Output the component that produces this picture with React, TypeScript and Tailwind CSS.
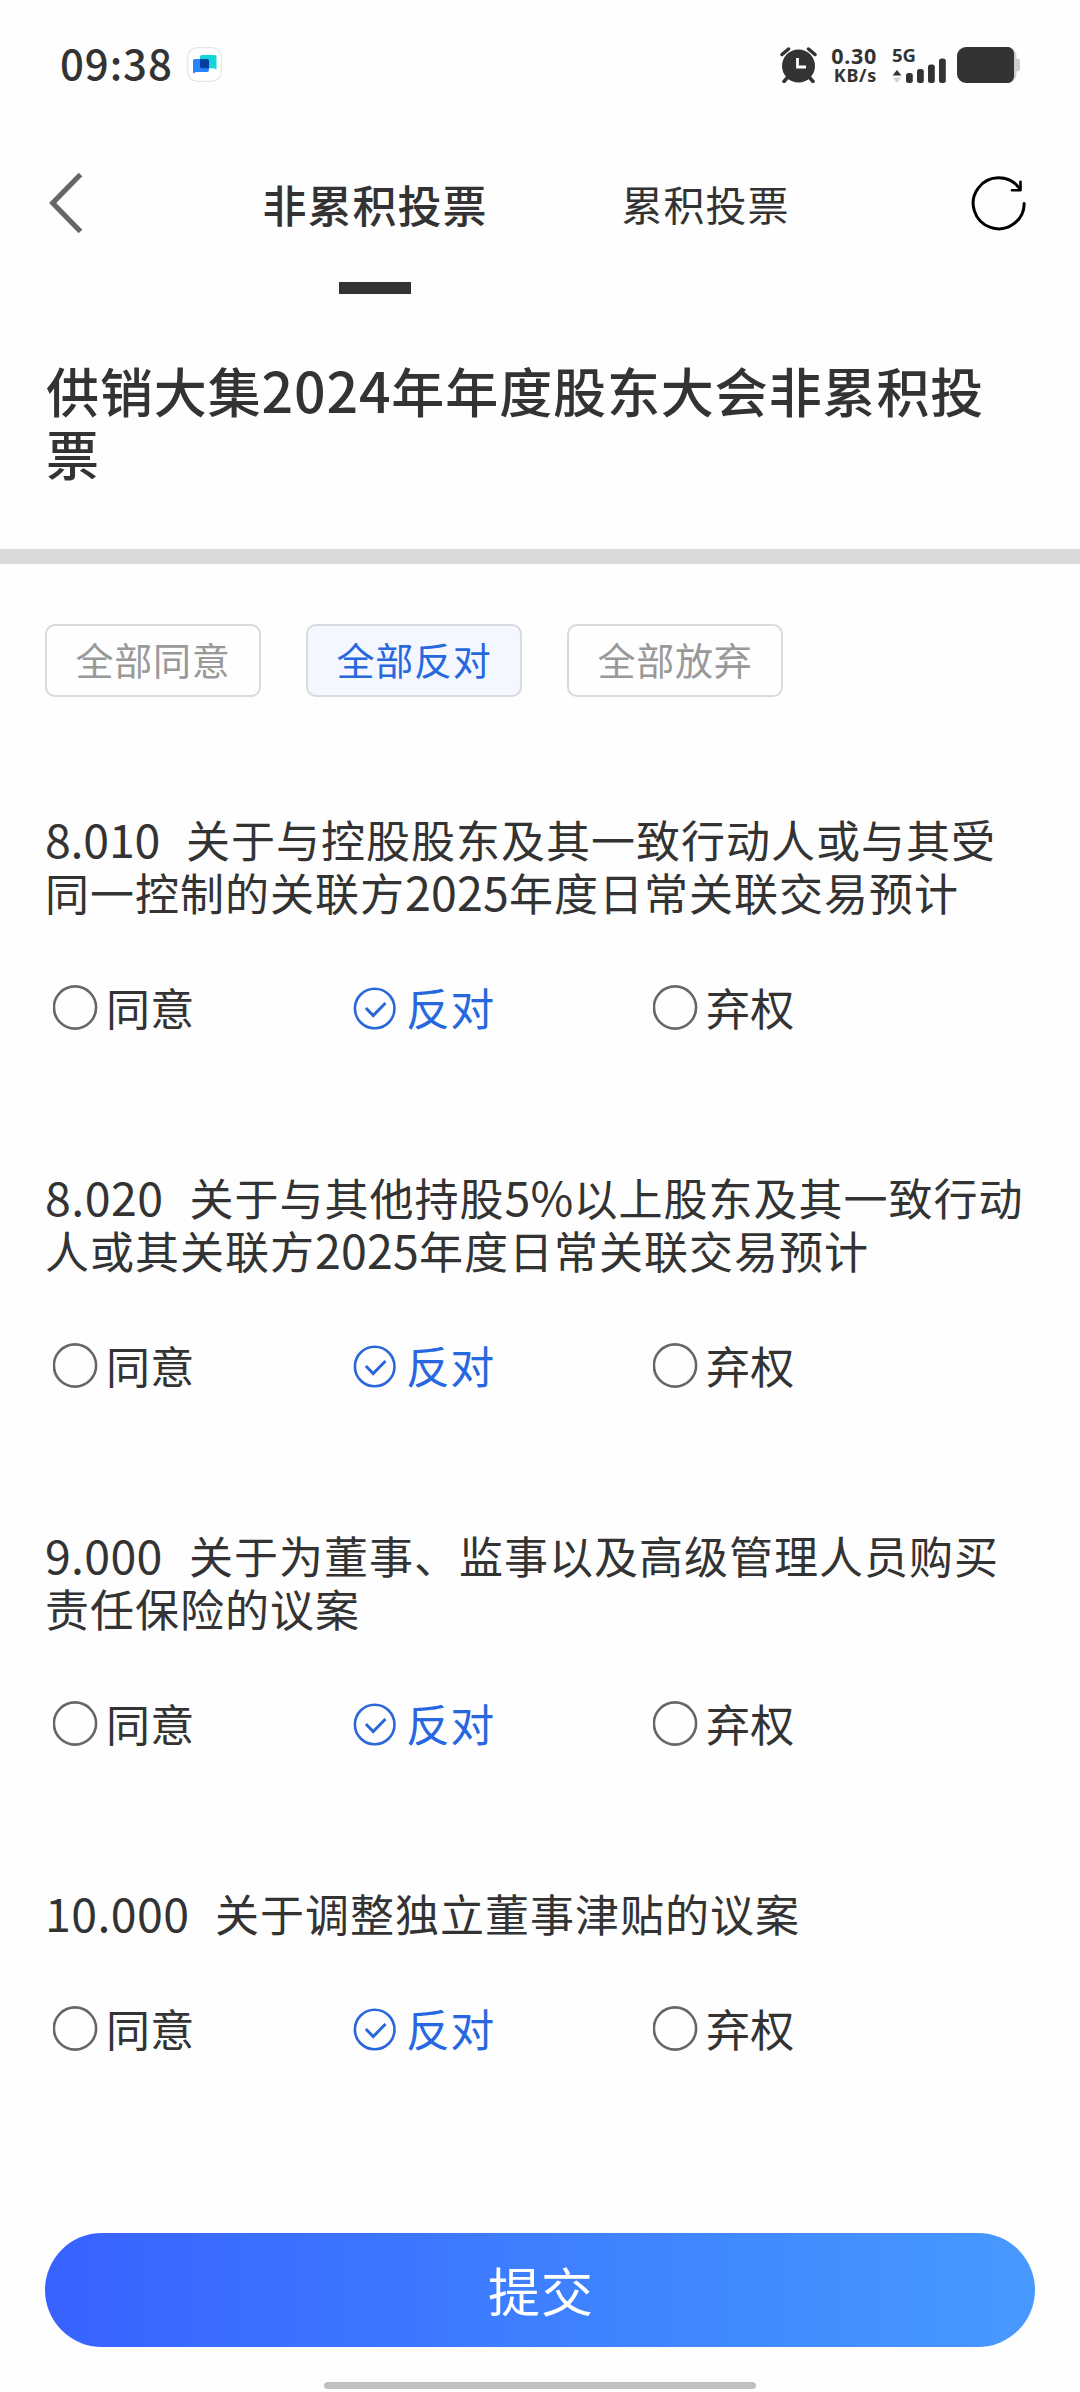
import React from "react";

const CJK = "font-['Noto_Sans_CJK_SC',sans-serif]";

type Part = string | { n: string };

interface Motion {
  id: string;
  idClass: string;
  lines: Part[][];
}

const MOTIONS: Motion[] = [
  {
    id: "8.010",
    idClass: "w-[141px] tracking-[-0.2px]",
    lines: [
      ["关于与控股股东及其一致行动人或与其受"],
      ["同一控制的关联方", { n: "2025" }, "年度日常关联交易预计"],
    ],
  },
  {
    id: "8.020",
    idClass: "w-[144.5px] tracking-[0.5px]",
    lines: [
      ["关于与其他持股", { n: "5%" }, "以上股东及其一致行动"],
      ["人或其关联方", { n: "2025" }, "年度日常关联交易预计"],
    ],
  },
  {
    id: "9.000",
    idClass: "w-[144px] tracking-[0.3px]",
    lines: [["关于为董事、监事以及高级管理人员购买"], ["责任保险的议案"]],
  },
  {
    id: "10.000",
    idClass: "w-[170px] tracking-[0.4px]",
    lines: [["关于调整独立董事津贴的议案"]],
  },
];

function StatusBar() {
  return (
    <div className="flex h-[130px] items-start pl-[60px] pr-[60px] pt-[47px] text-[#333]">
      <div className="-mt-[3px] flex h-9 w-[127px] items-center text-[42px] font-medium leading-none tracking-[0.9px] whitespace-nowrap">
        <span>09:38</span>
      </div>
      <svg className="size-[35px]" viewBox="0 0 35 35">
        <rect x="0.7" y="0.7" width="33.6" height="33.6" rx="9.5" fill="#fff" stroke="#e6e6e6" strokeWidth="1.2" />
        <path d="M15 8h12.500a2 2 0 0 1 2 2v12.500l-3-1.300H15a2 2 0 0 1-2-2V10a2 2 0 0 1 2-2z" fill="#12d5d8" />
        <path d="M8 12h12a2 2 0 0 1 2 2v9a2 2 0 0 1-2 2H9.200l-3.200 1.600V14a2 2 0 0 1 2-2z" fill="#2684ff" />
        <path d="M13 12h7a2 2 0 0 1 2 2v7.200h-7a2 2 0 0 1-2-2z" fill="#06409c" />
      </svg>
      <div className="ml-auto flex h-9 items-start">
        <svg className="h-9 w-[37px]" viewBox="0 0 37 36">
          <circle cx="18.500" cy="19" r="16.500" fill="#333" />
          <path d="M2 7.500l6.500-5.500M35 7.500l-6.500-5.500" stroke="#333" strokeWidth="3.500" strokeLinecap="round" />
          <path d="M8 30l-4 4.500M29 30l4 4.500" stroke="#333" strokeWidth="3.500" strokeLinecap="round" />
          <path d="M17.500 11v9h8.500" fill="none" stroke="#fff" strokeWidth="2.800" />
        </svg>
        <div className="ml-[14px] flex w-[45px] flex-col items-end font-['Noto_Sans',sans-serif] font-bold whitespace-nowrap">
          <span className="-mr-px h-[18px] text-[21.5px] leading-[17px] tracking-[0.7px]">0.30</span>
          <span className="-mr-px h-[18px] text-[18px] leading-[21px] tracking-[0.7px]">KB/s</span>
        </div>
        <div className="ml-[16px] flex h-9 w-[54px] flex-col">
          <span className="h-[11px] font-['Noto_Sans',sans-serif] text-[18.5px] font-bold leading-[15px]">5G</span>
          <svg className="h-[25px] w-[54px]" viewBox="0 0 54 25">
            <path d="M0.500 17.500l4.500-5.500 4.500 5.500z" fill="#333" />
            <path d="M0.500 19.500l4.500 5.500 4.500-5.500z" fill="#d4d4d4" />
            <rect x="14" y="15" width="6.800" height="10" rx="2.500" fill="#333" />
            <rect x="25" y="11" width="6.800" height="14" rx="2.500" fill="#333" />
            <rect x="36" y="6.500" width="6.800" height="18.500" rx="2.500" fill="#333" />
            <rect x="47" y="0.500" width="6.800" height="24.500" rx="2.500" fill="#333" />
          </svg>
        </div>
        <svg className="ml-[11px] h-9 w-[63px]" viewBox="0 0 63 36">
          <rect x="8" y="0" width="51.500" height="36" rx="9" fill="#ccc" />
          <rect x="56" y="11.500" width="7" height="13" rx="3" fill="#ccc" />
          <path d="M9 0h42c3 0 6 3 6 7v22c0 4-3 7-6 7H9a9 9 0 0 1-9-9V9a9 9 0 0 1 9-9z" fill="#333" />
        </svg>
      </div>
    </div>
  );
}

function NavBar() {
  return (
    <nav className="flex h-[170px] items-start text-[#333]">
      <svg className="ml-[45px] mt-[40px] h-[66px] w-[45px]" viewBox="0 0 45 66" fill="none">
        <path d="M35.500 4.500L7.700 33l27.800 28.500" stroke="#666" strokeWidth="5.200" />
      </svg>
      <div className="ml-[120px] flex w-[330px] flex-col items-center">
        <div className="flex h-[152px] items-center pb-[5px] text-[44px] font-medium leading-none tracking-[1px] whitespace-nowrap">非累积投票</div>
        <div className="h-3 w-[72px] bg-[#333]" />
      </div>
      <div className="flex h-[152px] w-[330px] items-center justify-center pb-[5px] pl-px text-[41px] leading-none tracking-[1px] whitespace-nowrap">累积投票</div>
      <svg className="ml-[98px] mt-[42px] size-[64px]" viewBox="0 0 64 64" fill="none">
        <path d="M56.200 31.500A25.500 25.500 0 1 1 51.500 16.500" stroke="#000" strokeWidth="3" strokeLinecap="round" />
        <path d="M52.500 9.700v8.600h-8.500" stroke="#000" strokeWidth="2.600" strokeLinecap="round" strokeLinejoin="round" />
      </svg>
    </nav>
  );
}

function BulkButton({ label, active = false }: { label: string; active?: boolean }) {
  return (
    <button
      className={
        "flex h-[73px] w-[216px] items-center justify-center rounded-[10px] border-2 pb-[3px] text-[38px] leading-none tracking-[0.8px] whitespace-nowrap " +
        (active ? "border-[#d9dadd] bg-[#f4f7ff] text-[#2768dc]" : "border-[#dadada] text-[#999]")
      }
    >
      {label}
    </button>
  );
}

function Choice({ label, checked = false }: { label: string; checked?: boolean }) {
  return (
    <div className="flex h-[45px] w-[300px] items-center">
      {checked ? (
        <svg className="size-[45px]" viewBox="0 0 45 45" fill="none">
          <circle cx="21.700" cy="23.500" r="19.800" stroke="#2b67d9" strokeWidth="2.600" />
          <path d="M12.900 23l7.300 7.600 12.300-12.600" stroke="#2b67d9" strokeWidth="3" />
        </svg>
      ) : (
        <svg className="size-[45px]" viewBox="0 0 45 45" fill="none">
          <circle cx="22" cy="22.500" r="21.100" stroke="#666" strokeWidth="2.600" />
        </svg>
      )}
      <span
        className={
          "ml-[8px] text-[44px] leading-[45px] tracking-[0.3px] whitespace-nowrap " +
          (checked ? "text-[#2768e0]" : "text-[#333]")
        }
      >
        {label}
      </span>
    </div>
  );
}

function MotionItem({ motion }: { motion: Motion }) {
  return (
    <section className="pb-[141px] text-[44px] tracking-[1px] text-[#333]">
      {motion.lines.map((parts, i) => (
        <div key={i} className="h-[53px] leading-[53px] whitespace-nowrap">
          {i === 0 && (
            <span className={"inline-block text-[46.5px] leading-[0] " + motion.idClass}>{motion.id}</span>
          )}
          {parts.map((p, j) =>
            typeof p === "string" ? (
              <span key={j}>{p}</span>
            ) : (
              <span key={j} className="text-[46.5px] leading-[0] tracking-[0.2px]">{p.n}</span>
            ),
          )}
        </div>
      ))}
      <div className="mt-[66px] flex pl-[8px]">
        <Choice label="同意" />
        <Choice label="反对" checked />
        <Choice label="弃权" />
      </div>
    </section>
  );
}

export default function App() {
  return (
    <div className={"flex h-[2392px] w-[1080px] flex-col overflow-hidden bg-[#fefefe] " + CJK}>
      <StatusBar />
      <NavBar />
      <h1 className="h-[249px] pl-[46px] pt-[59px] text-[53px] font-medium leading-[63px] tracking-[0.9px] whitespace-nowrap text-[#333]">
        供销大集<span className="text-[55.5px] leading-[0] tracking-[0.8px]">2024</span>年年度股东大会非累积投
        <br />票
      </h1>
      <div className="h-[15px] shrink-0 bg-[#dadada]" />
      <div className="flex gap-[45px] pl-[45px] pt-[60px]">
        <BulkButton label="全部同意" />
        <BulkButton label="全部反对" active />
        <BulkButton label="全部放弃" />
      </div>
      <main className="flex h-[1536px] shrink-0 flex-col overflow-hidden pl-[45px] pt-[116px]">
        {MOTIONS.map((m) => (
          <MotionItem key={m.id} motion={m} />
        ))}
      </main>
      <button className="mx-[45px] flex h-[114px] shrink-0 items-center justify-center rounded-full bg-linear-to-r from-[#3862ff] to-[#4899ff] pl-[2px] text-[52px] leading-none tracking-[1px] text-white">
        提交
      </button>
      <div className="mx-auto mt-[35px] h-[7px] w-[432px] shrink-0 rounded-full bg-[#c0c0c0]" />
    </div>
  );
}
